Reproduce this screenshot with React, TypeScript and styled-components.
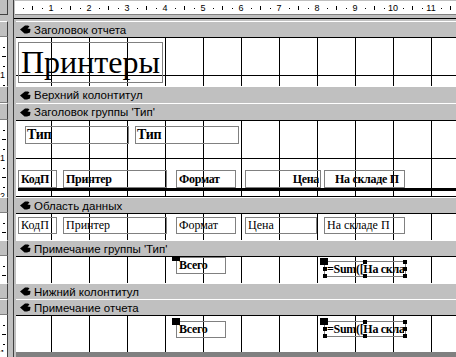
import React from "react";
import styled, { createGlobalStyle } from "styled-components";

const GlobalStyle = createGlobalStyle`
  html, body {
    margin: 0;
    padding: 0;
    background: #c0c0c0;
  }
  body {
    font-family: "Liberation Sans", Arial, sans-serif;
  }
`;

const CM = 38;
const ORIGIN = 13; // x of ruler zero, in page coords

const Window = styled.div`
  width: 456px;
  height: 357px;
  overflow: hidden;
  background: #c0c0c0;
  display: flex;
  flex-direction: column;
`;

const Row = styled.div<{ $h: number }>`
  display: flex;
  flex: none;
  height: ${(p) => p.$h}px;
`;

const Gutter = styled.div`
  width: 13px;
  flex: none;
  display: flex;
  background: #c0c0c0;
  border-right: 1px solid #404040;
`;

const RulerCell = styled.div<{ $kind: "corner" | "head" | "body" }>`
  width: 8px;
  flex: none;
  box-sizing: border-box;
  border-right: 1px solid #404040;
  background: ${(p) => (p.$kind === "body" ? "#ffffff" : "#c0c0c0")};
  ${(p) => p.$kind === "corner" && "height: 15px; border-bottom: 1px solid #404040;"}
  ${(p) =>
    p.$kind === "head" &&
    "border-top: 1px solid #ffffff; border-bottom: 1px solid #808080;"}
  overflow: visible;
  position: relative;
`;

const Main = styled.div<{ $pad?: number }>`
  flex: 1;
  min-width: 0;
  display: flex;
  flex-direction: column;
  padding-left: ${(p) => p.$pad ?? 2}px;
`;

const RulerStrip = styled.div`
  margin-top: 1px;
  margin-left: 1px;
  height: 13px;
  background: #ffffff;
  border-bottom: 1px solid #808080;
`;

const RulerGap = styled.div`
  height: 3px;
`;

const SplitLine = styled.div`
  height: 1px;
  background: #000000;
`;

const HeaderBar = styled.div`
  flex: 1;
  display: flex;
  align-items: center;
  gap: 3px;
  padding-left: 4px;
  background: #c0c0c0;
  border-top: 1px solid #ffffff;
  font-size: 11.5px;
  color: #000;
  white-space: nowrap;
`;

const Body = styled.div`
  flex: 1;
  position: relative;
  overflow: hidden;
  background-color: #ffffff;
  background-image: linear-gradient(to right, #000 1px, transparent 1px),
    linear-gradient(to bottom, #000 1px, transparent 1px);
  background-size: ${CM}px ${CM}px;
  background-position: ${51 - 16}px 0, 0 0;
`;

const Bottom = styled.div`
  flex: 1;
  background: #808080;
`;

const Ctl = styled.div<{
  $x: number;
  $y: number;
  $w: number;
  $h: number;
  $bold?: boolean;
  $size?: number;
  $pad?: number;
  $align?: "left" | "right";
}>`
  position: absolute;
  left: ${(p) => p.$x}px;
  top: ${(p) => p.$y}px;
  width: ${(p) => p.$w}px;
  height: ${(p) => p.$h}px;
  box-sizing: border-box;
  border: 1px solid #808080;
  display: flex;
  align-items: center;
  padding-left: ${(p) => p.$pad ?? 1}px;
  padding-right: 1px;
  text-align: ${(p) => p.$align ?? "left"};
  font-family: "Liberation Serif", "Times New Roman", serif;
  font-weight: ${(p) => (p.$bold ? 700 : 400)};
  font-size: ${(p) => p.$size ?? 12}px;
  letter-spacing: ${(p) => (p.$bold ? "-0.3px" : "0")};
  color: #000;
  white-space: nowrap;
  overflow: visible;
`;

const ClipText = styled.span`
  overflow: hidden;
  display: block;
  width: 100%;
`;

const ThickRule = styled.div`
  position: absolute;
  left: 2px;
  right: 0;
  top: 68px;
  height: 3px;
  background: #000;
`;

const Handle = styled.div<{ $px: string; $py: string }>`
  position: absolute;
  left: ${(p) => p.$px};
  top: ${(p) => p.$py};
  width: 4px;
  height: 4px;
  background: #000;
  transform: translate(-50%, -50%);
`;

const MoveHandle = styled.div`
  position: absolute;
  left: -5px;
  top: -4px;
  width: 8px;
  height: 7px;
  background: #000;
`;

function SectionIcon() {
  return (
    <svg width="11" height="9" viewBox="0 0 11 9">
      <path d="M0 4.5 L5 0.5 H8 L9.5 1.5 L7.5 3.5 L10.5 4 L10 7.5 L7 8.5 H4.5 Z" fill="#000" />
    </svg>
  );
}

function TopRuler() {
  const marks = [];
  for (let k = 1; k <= 47; k++) {
    const x = ORIGIN + 9.5 * k - 15;
    if (k % 4 === 0) {
      marks.push(
        <text key={k} x={x} y={10} fontSize="9" textAnchor="middle" fontFamily="Liberation Sans, Arial, sans-serif">
          {k / 4}
        </text>
      );
    } else if (k % 4 === 2) {
      marks.push(<rect key={k} x={Math.round(x)} y={5} width={1} height={4} fill="#000" />);
    } else {
      marks.push(<rect key={k} x={Math.round(x)} y={7} width={1} height={1} fill="#000" />);
    }
  }
  return (
    <svg width="441" height="13" style={{ display: "block" }}>
      {marks}
    </svg>
  );
}

function SideRuler({ h }: { h: number }) {
  const marks = [];
  for (let k = 1; 9.5 * k < h + 6; k++) {
    const y = Math.round(9.5 * k);
    if (k % 4 === 0) {
      marks.push(
        <text key={k} x={0} y={y + 3} fontSize="9" fontFamily="Liberation Sans, Arial, sans-serif">
          {k / 4}
        </text>
      );
    } else if (k % 4 === 2) {
      marks.push(<rect key={k} x={2} y={y} width={4} height={1} fill="#000" />);
    } else {
      marks.push(<rect key={k} x={3} y={y} width={2} height={1} fill="#000" />);
    }
  }
  return (
    <svg width="8" height={h + 8} style={{ position: "absolute", left: 0, top: 0, overflow: "visible" }}>
      {marks}
    </svg>
  );
}

function Selected({ x, y, w, h, text }: { x: number; y: number; w: number; h: number; text: string }) {
  const spots: [string, string][] = [
    ["50%", "0"],
    ["100%", "0"],
    ["0", "50%"],
    ["100%", "50%"],
    ["0", "100%"],
    ["50%", "100%"],
    ["100%", "100%"],
  ];
  return (
    <Ctl $x={x} $y={y} $w={w} $h={h} $bold $pad={2}>
      <ClipText>{text}</ClipText>
      <MoveHandle />
      {spots.map(([px, py], i) => (
        <Handle key={i} $px={px} $py={py} />
      ))}
    </Ctl>
  );
}

function Section({ title, hh, bh, children }: { title: string; hh: number; bh: number; children?: React.ReactNode }) {
  return (
    <>
      <Row $h={hh}>
        <Gutter>
          <RulerCell $kind="head" />
        </Gutter>
        <Main>
          <HeaderBar>
            <SectionIcon />
            {title}
          </HeaderBar>
        </Main>
      </Row>
      {bh > 0 && (
        <Row $h={bh}>
          <Gutter>
            <RulerCell $kind="body">
              <SideRuler h={bh} />
            </RulerCell>
          </Gutter>
          <Main>
            <Body>{children}</Body>
          </Main>
        </Row>
      )}
    </>
  );
}

const columnHeads: { x: number; w: number; text: string; align?: "left" | "right"; pad?: number }[] = [
  { x: 2, w: 39, text: "КодП" },
  { x: 47, w: 104, text: "Принтер" },
  { x: 160, w: 60, text: "Формат" },
  { x: 229, w: 76, text: "Цена", align: "right" },
  { x: 308, w: 81, text: "На складе П", pad: 10 },
];

const dataFields = [
  { x: 2, w: 39, text: "КодП" },
  { x: 47, w: 104, text: "Принтер" },
  { x: 160, w: 60, text: "Формат" },
  { x: 229, w: 72, text: "Цена" },
  { x: 308, w: 81, text: "На складе П" },
];

export default function App() {
  return (
    <>
      <GlobalStyle />
      <Window>
        <Row $h={21}>
          <Gutter>
            <RulerCell $kind="corner" />
          </Gutter>
          <Main $pad={0}>
            <RulerStrip>
              <TopRuler />
            </RulerStrip>
            <RulerGap />
            <SplitLine />
          </Main>
        </Row>

        <Section title="Заголовок отчета" hh={16} bh={49}>
          <Ctl $x={2} $y={5} $w={145} $h={41} $size={32} $pad={2}>
            Принтеры
          </Ctl>
        </Section>

        <Section title="Верхний колонтитул" hh={17} bh={0} />

        <Section title="Заголовок группы 'Тип'" hh={17} bh={77}>
          <Ctl $x={9} $y={6} $w={104} $h={18} $bold $size={14}>
            Тип
          </Ctl>
          <Ctl $x={119} $y={6} $w={104} $h={18} $bold $size={14}>
            Тип
          </Ctl>
          {columnHeads.map((c) => (
            <Ctl key={c.text} $x={c.x} $y={50} $w={c.w} $h={18} $bold $pad={c.pad ?? 2} $align={c.align}>
              <ClipText>{c.text}</ClipText>
            </Ctl>
          ))}
          <ThickRule />
        </Section>

        <Section title="Область данных" hh={16} bh={27}>
          {dataFields.map((c) => (
            <Ctl key={c.text} $x={c.x} $y={4} $w={c.w} $h={17} $pad={2}>
              <ClipText>{c.text}</ClipText>
            </Ctl>
          ))}
        </Section>

        <Section title="Примечание группы 'Тип'" hh={16} bh={27}>
          <Ctl $x={160} $y={1} $w={50} $h={17} $bold $pad={2}>
            Всего
            <MoveHandle />
          </Ctl>
          <Selected x={308} y={5} w={82} h={16} text="=Sum([На скла" />
        </Section>

        <Section title="Нижний колонтитул" hh={16} bh={0} />

        <Section title="Примечание отчета" hh={16} bh={37}>
          <Ctl $x={160} $y={6} $w={50} $h={17} $bold $pad={2}>
            Всего
            <MoveHandle />
          </Ctl>
          <Selected x={308} y={6} w={82} h={16} text="=Sum([На скла" />
        </Section>

        <Row $h={5}>
          <Gutter>
            <RulerCell $kind="body" />
          </Gutter>
          <Main>
            <Bottom />
          </Main>
        </Row>
      </Window>
    </>
  );
}
